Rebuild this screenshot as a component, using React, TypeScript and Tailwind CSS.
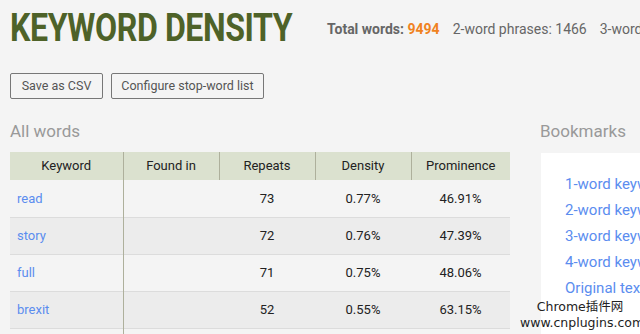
import React from "react";

const rows = [
  { k: "read", r: "73", d: "0.77%", p: "46.91%" },
  { k: "story", r: "72", d: "0.76%", p: "47.39%" },
  { k: "full", r: "71", d: "0.75%", p: "48.06%" },
  { k: "brexit", r: "52", d: "0.55%", p: "63.15%" },
];

const bookmarks = ["1-word keywords", "2-word keywords", "3-word keywords", "4-word keywords", "Original text"];

export default function App() {
  return (
    <div className="relative w-[640px] h-[334px] overflow-hidden bg-[#f4f4f4] font-['Roboto',sans-serif]">
      <div className="flex items-center pl-[10px] pt-[8px] h-[48px] whitespace-nowrap">
        <div className="w-[282px] shrink-0">
          <h1 className="inline-block origin-left scale-x-[0.845] text-[38px] leading-none font-bold text-[#4e6228] tracking-[-0.5px]">
            KEYWORD DENSITY
          </h1>
        </div>
        <div className="ml-[35px] text-[14px] text-[#666] mt-[3px]">
          <span className="font-bold">Total words: </span>
          <span className="font-bold text-[#f0821e]">9494</span>
          <span className="ml-[13px]">2-word phrases: 1466</span>
          <span className="ml-[13px]">3-word phrases: 412</span>
        </div>
      </div>

      <div className="flex gap-[8px] pl-[10px] mt-[25px]">
        <button className="h-[26px] w-[93px] border border-[#777] rounded-[2px] text-[12.5px] text-[#555]">Save as CSV</button>
        <button className="h-[26px] w-[153px] border border-[#777] rounded-[2px] text-[12.5px] text-[#555]">Configure stop-word list</button>
      </div>

      <div className="flex pl-[10px] mt-[22px]">
        <div className="w-[500px] shrink-0">
          <div className="text-[17px] leading-[20px] text-[#999] h-[31px]">All words</div>
          <table className="w-[500px] table-fixed border-collapse text-[13px] text-[#222]">
            <colgroup>
              <col className="w-[113px]" />
              <col className="w-[96px]" />
              <col className="w-[96px]" />
              <col className="w-[96px]" />
              <col className="w-[99px]" />
            </colgroup>
            <thead>
              <tr className="h-[28px] bg-[#dbe1cf]">
                <th className="font-normal border-r border-[#aeb09c]">Keyword</th>
                <th className="font-normal border-r border-[#aeb09c]">Found in</th>
                <th className="font-normal border-r border-[#aeb09c]">Repeats</th>
                <th className="font-normal border-r border-[#aeb09c]">Density</th>
                <th className="font-normal">Prominence</th>
              </tr>
            </thead>
            <tbody>
              {rows.map((r, i) => (
                <tr key={r.k} className={`h-[37px] border-b border-[#dcdcdc] ${i % 2 === 1 ? "bg-[#ececec]" : "bg-[#f4f4f4]"}`}>
                  <td className="pl-[7px] text-[#5b8def] border-r border-[#aeb09c]">{r.k}</td>
                  <td></td>
                  <td className="text-center">{r.r}</td>
                  <td className="text-center">{r.d}</td>
                  <td className="text-center">{r.p}</td>
                </tr>
              ))}
              <tr className="h-[20px]">
                <td className="border-r border-[#aeb09c]"></td>
                <td></td>
                <td></td>
                <td></td>
                <td></td>
              </tr>
            </tbody>
          </table>
        </div>
        <div className="ml-[30px] flex-1">
          <div className="text-[17px] leading-[20px] text-[#999] h-[32px]">Bookmarks</div>
          <div className="ml-[1px] bg-white h-[200px] pt-[21px] pl-[24px] whitespace-nowrap">
            {bookmarks.map((b) => (
              <div key={b} className="h-[26px] leading-[20px] text-[15px] text-[#5b8def]">{b}</div>
            ))}
          </div>
        </div>
      </div>

      <div className="absolute left-[520px] top-[299px] w-[120px] text-center leading-[16px] text-[#222] font-['DejaVu_Sans','Noto_Sans_CJK_SC',sans-serif]">
        <div className="text-[12.5px]">Chrome插件网</div>
        <div className="text-[12.5px]">www.cnplugins.com</div>
      </div>
    </div>
  );
}
